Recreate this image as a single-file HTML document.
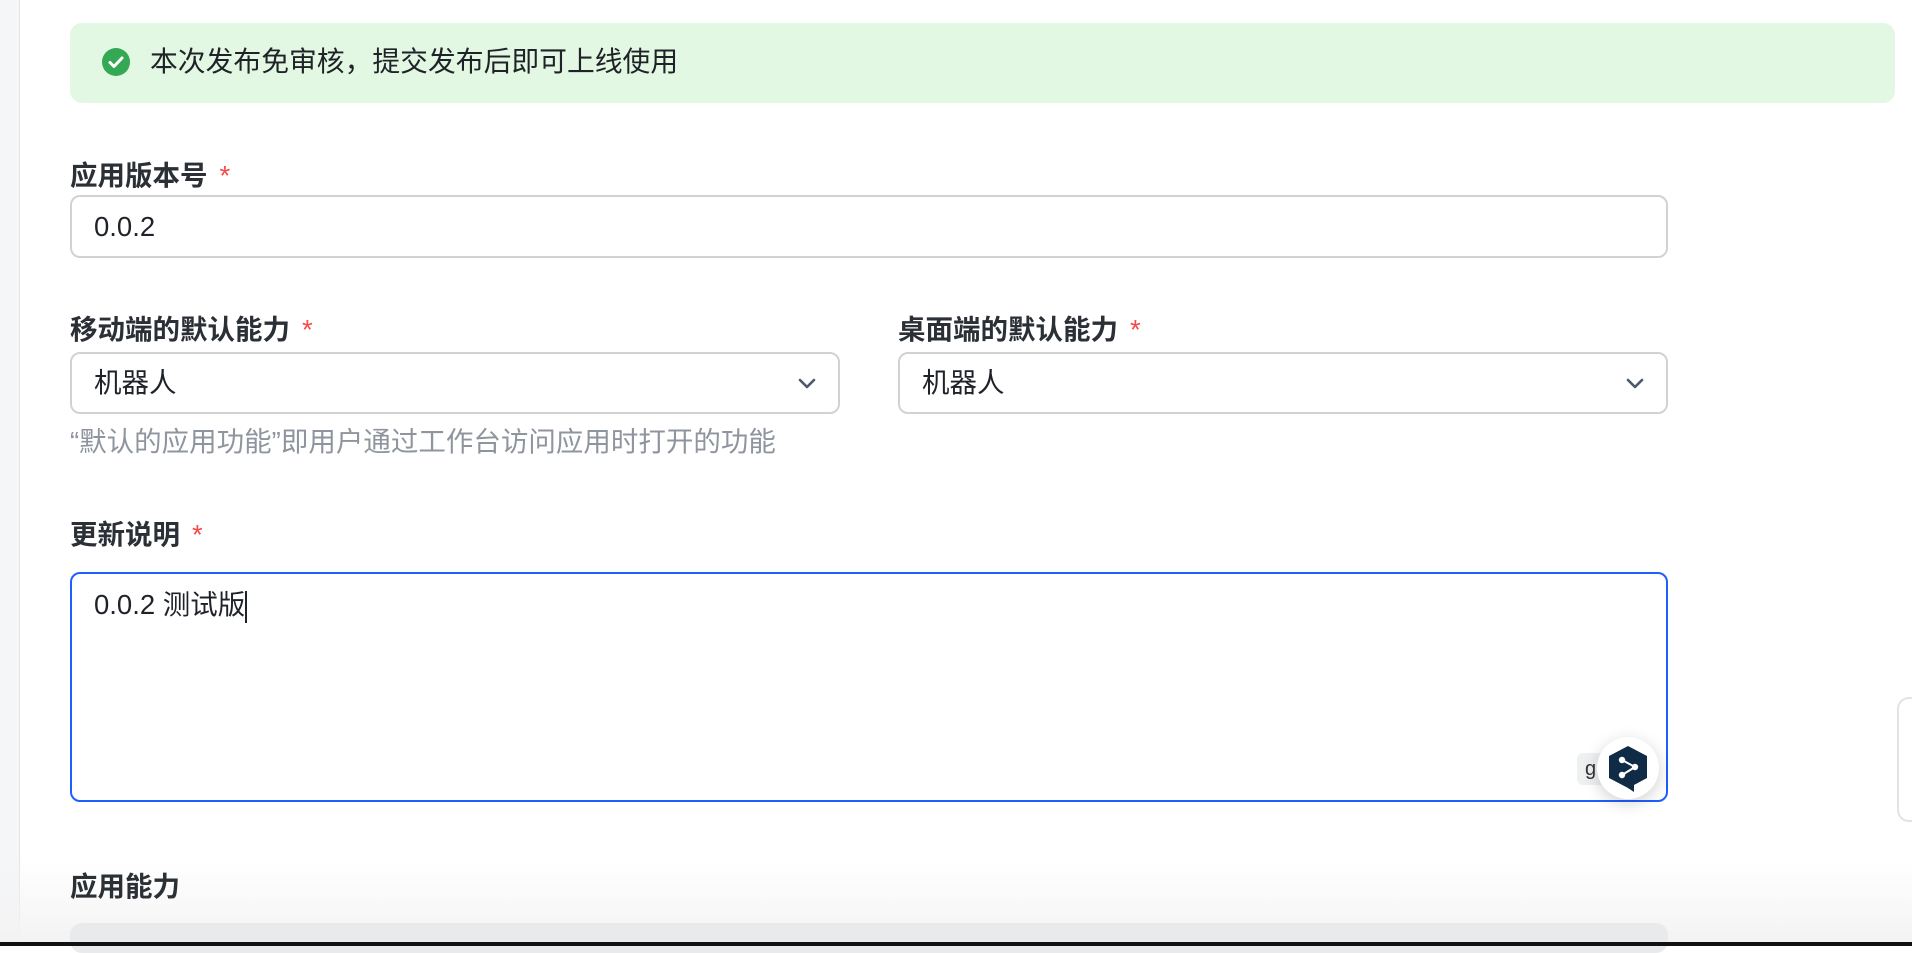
<!DOCTYPE html>
<html><head><meta charset="utf-8">
<style>
*{box-sizing:border-box;margin:0;padding:0}
html,body{width:1912px;height:946px;overflow:hidden;background:#fff;font-family:"Liberation Sans","Noto Sans CJK SC",sans-serif;color:#1f2329}
.abs{position:absolute}
.side{left:0;top:0;width:20px;height:946px;background:#f5f6f7;border-right:1px solid #e4e5e7}
.banner{left:70px;top:23px;width:1825px;height:80px;background:#e3f8e2;border-radius:12px}
.lbl{font-size:27.5px;font-weight:bold;color:#2b2f36;line-height:36px;white-space:nowrap}
.star{color:#f54a45;margin-left:12px;font-weight:normal}
.box{border:2px solid #d0d3d6;border-radius:10px;background:#fff;font-size:27.5px;line-height:1;padding-left:22px;display:flex;align-items:center}
.chev{position:absolute;right:22px;top:22px}
</style></head><body>
<div class="abs side"></div>
<div class="abs banner"></div>
<svg class="abs" style="left:102px;top:48px" width="28" height="28" viewBox="0 0 28 28"><circle cx="14" cy="14" r="14" fill="#34a853"/><path d="M8 14.5l4 4 8-8.5" stroke="#fff" stroke-width="3" fill="none" stroke-linecap="round" stroke-linejoin="round"/></svg>
<div class="abs" style="left:150px;top:44px;font-size:27.8px;line-height:36px;color:#1f2329;white-space:nowrap">本次发布免审核，提交发布后即可上线使用</div>

<div class="abs lbl" style="left:70px;top:158px">应用版本号<span class="star">*</span></div>
<div class="abs box" style="left:70px;top:195px;width:1598px;height:63px">0.0.2</div>

<div class="abs lbl" style="left:70px;top:312px">移动端的默认能力<span class="star">*</span></div>
<div class="abs lbl" style="left:898px;top:312px">桌面端的默认能力<span class="star">*</span></div>
<div class="abs box" style="left:70px;top:352px;width:770px;height:62px">机器人<svg class="chev" width="18" height="14" viewBox="0 0 18 14"><path d="M2 4l7 7 7-7" stroke="#4e5969" stroke-width="2.6" fill="none" stroke-linecap="round" stroke-linejoin="round"/></svg></div>
<div class="abs box" style="left:898px;top:352px;width:770px;height:62px">机器人<svg class="chev" width="18" height="14" viewBox="0 0 18 14"><path d="M2 4l7 7 7-7" stroke="#4e5969" stroke-width="2.6" fill="none" stroke-linecap="round" stroke-linejoin="round"/></svg></div>
<div class="abs" style="left:70px;top:424px;font-size:27.5px;line-height:36px;color:#8f959e;white-space:nowrap">“默认的应用功能”即用户通过工作台访问应用时打开的功能</div>

<div class="abs lbl" style="left:70px;top:517px">更新说明<span class="star">*</span></div>
<div class="abs" style="left:70px;top:572px;width:1598px;height:230px;border:2px solid #1f5eff;border-radius:10px;background:#fff"></div>
<div class="abs" style="left:94px;top:587px;font-size:27.5px;line-height:36px;white-space:nowrap">0.0.2 测试版<span style="display:inline-block;width:2px;height:32px;background:#1f2329;vertical-align:middle"></span></div>

<div class="abs" style="left:1577px;top:753px;width:40px;height:32px;background:#eef0f2;border-radius:6px;font-size:20px;line-height:32px;padding-left:8px;color:#333">g</div>
<div class="abs" style="left:1597px;top:737px;width:62px;height:62px;border-radius:50%;background:#fff;box-shadow:0 4px 16px rgba(0,0,0,.18)"></div>
<svg class="abs" style="left:1607px;top:744px" width="42" height="50" viewBox="0 0 42 50"><path d="M21 2l19 10v22l-13 7v7l-6-4-19-10V12z" fill="#0f2b46"/><circle cx="15" cy="16" r="3.2" fill="#fff"/><circle cx="28" cy="23" r="3.2" fill="#fff"/><circle cx="15" cy="31" r="3.2" fill="#fff"/><path d="M15 16l13 7-13 8" stroke="#fff" stroke-width="2" fill="none"/></svg>

<div class="abs" style="left:1897px;top:697px;width:40px;height:125px;border:2px solid #e1e3e6;border-radius:12px;background:#fff"></div>

<div class="abs" style="left:0;top:860px;width:1912px;height:82px;background:linear-gradient(#fff0,#f3f3f4)"></div>
<div class="abs lbl" style="left:70px;top:869px">应用能力</div>
<div class="abs" style="left:70px;top:923px;width:1598px;height:30px;background:#e9eaec;border-radius:12px"></div>
<div class="abs" style="left:0;top:942px;width:1912px;height:4px;background:#111"></div>
</body></html>
